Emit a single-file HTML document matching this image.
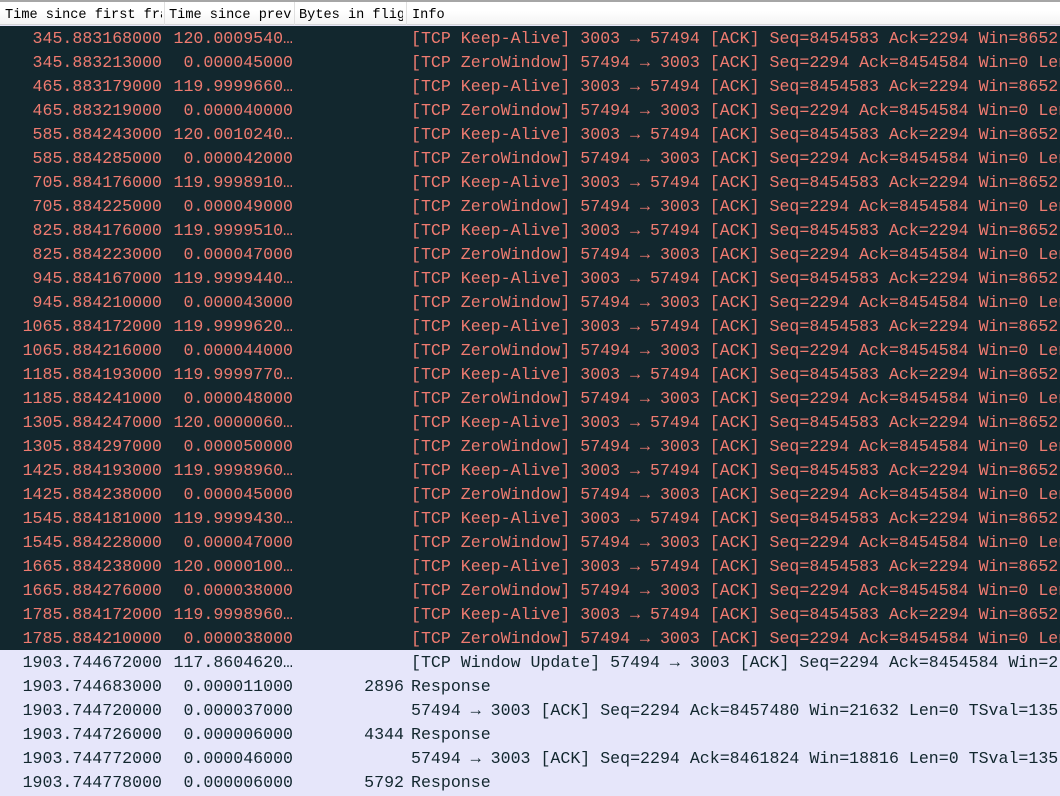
<!DOCTYPE html>
<html><head><meta charset="utf-8"><style>
body{margin:0;width:1060px;height:796px;overflow:hidden;background:#e6e6fa;font-family:"Liberation Mono","DejaVu Sans Mono",monospace}
.hd{position:absolute;left:0;top:0;width:1060px;height:25px;border-top:2px solid #a6a6a6;border-bottom:1px solid #d5d5d5;background:linear-gradient(#fff 0,#fff 40%,#f4f4f4 100%);box-sizing:border-box;font-size:13.6px;color:#000}
.hd span{position:absolute;top:6px;white-space:nowrap;overflow:hidden}
.hd i{position:absolute;top:0;width:1px;height:23px;background:#e0e0e0}
.r{position:absolute;left:0;width:1060px;height:24px;font-size:16.6px;line-height:24px;white-space:pre;overflow:hidden}
.d{background:#12272e;color:#ef7b70}
.l{background:#e6e6fa;color:#12272e}
.r span{position:absolute;top:1px}
.c1{right:898px}.c2{left:169px;width:124px;text-align:right}.c3{right:656px}.c4{left:411px}
</style></head><body>
<div class="hd"><span style="left:5px;width:157px">Time since first frame</span><i style="left:164px"></i><span style="left:169px;width:124px">Time since prev</span><i style="left:294px"></i><span style="left:299px;width:104px">Bytes in flight</span><i style="left:406px"></i><span style="left:412px">Info</span></div>
<div id="rows"></div>
<script>
var d=[["345.883168000","120.0009540…"],["345.883213000","0.000045000"],["465.883179000","119.9999660…"],["465.883219000","0.000040000"],["585.884243000","120.0010240…"],["585.884285000","0.000042000"],["705.884176000","119.9998910…"],["705.884225000","0.000049000"],["825.884176000","119.9999510…"],["825.884223000","0.000047000"],["945.884167000","119.9999440…"],["945.884210000","0.000043000"],["1065.884172000","119.9999620…"],["1065.884216000","0.000044000"],["1185.884193000","119.9999770…"],["1185.884241000","0.000048000"],["1305.884247000","120.0000060…"],["1305.884297000","0.000050000"],["1425.884193000","119.9998960…"],["1425.884238000","0.000045000"],["1545.884181000","119.9999430…"],["1545.884228000","0.000047000"],["1665.884238000","120.0000100…"],["1665.884276000","0.000038000"],["1785.884172000","119.9998960…"],["1785.884210000","0.000038000"]];
var ka="[TCP Keep-Alive] 3003 → 57494 [ACK] Seq=8454583 Ack=2294 Win=8652";
var zw="[TCP ZeroWindow] 57494 → 3003 [ACK] Seq=2294 Ack=8454584 Win=0 Len=0";
var h="";
d.forEach(function(x,i){h+='<div class="r d" style="top:'+(26+i*24)+'px"><span class="c1">'+x[0]+'</span><span class="c2">'+x[1]+'</span><span class="c3"></span><span class="c4">'+(i%2?zw:ka)+'</span></div>';});
var L=[["1903.744672000","117.8604620…","","[TCP Window Update] 57494 → 3003 [ACK] Seq=2294 Ack=8454584 Win=2"],["1903.744683000","0.000011000","2896","Response"],["1903.744720000","0.000037000","","57494 → 3003 [ACK] Seq=2294 Ack=8457480 Win=21632 Len=0 TSval=135"],["1903.744726000","0.000006000","4344","Response"],["1903.744772000","0.000046000","","57494 → 3003 [ACK] Seq=2294 Ack=8461824 Win=18816 Len=0 TSval=135"],["1903.744778000","0.000006000","5792","Response"]];
L.forEach(function(x,i){h+='<div class="r l" style="top:'+(650+i*24)+'px"><span class="c1">'+x[0]+'</span><span class="c2">'+x[1]+'</span><span class="c3">'+x[2]+'</span><span class="c4">'+x[3]+'</span></div>';});
document.getElementById("rows").innerHTML=h;
</script>
</body></html>
